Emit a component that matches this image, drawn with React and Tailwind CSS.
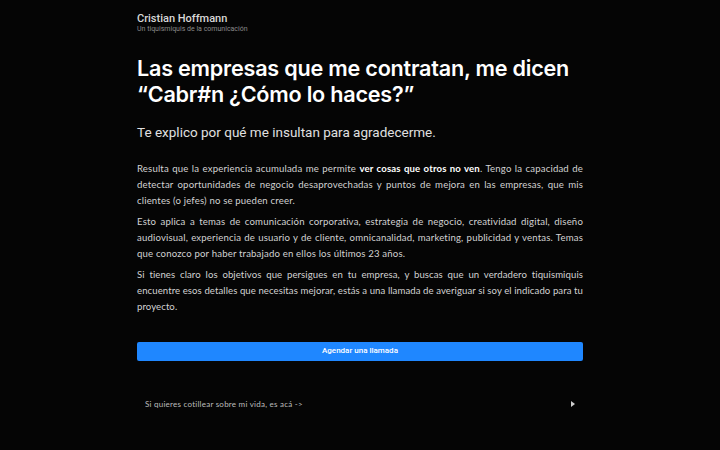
export default function App() {
  return (
    <div className="min-h-screen w-full bg-[#050505] text-[#e6e6e6]">
      <div className="w-[446px] mx-auto pt-[13px]">
        <header className="font-['Roboto',sans-serif] leading-none">
          <div className="text-[11px] font-medium text-[#d8d8d8]">Cristian Hoffmann</div>
          <div className="text-[7px] text-[#8a8a8a] mt-[2px]">Un tiquismiquis de la comunicación</div>
        </header>

        <h1 className="mt-[22px] font-['Inter',sans-serif] font-semibold text-[21.6px] leading-[26px] tracking-[-0.01em] text-white">
          Las empresas que me contratan, me dicen “Cabr#n ¿Cómo lo haces?”
        </h1>

        <p className="mt-[19px] font-['Roboto',sans-serif] text-[13.5px] leading-none text-[#e0e0e0]">
          Te explico por qué me insultan para agradecerme.
        </p>

        <div className="mt-[21px] font-['Lato',sans-serif] text-[9.6px] leading-[16px] tracking-[0.017em] text-[#d2d2d2] text-justify space-y-[5px]">
          <p>
            Resulta que la experiencia acumulada me permite <strong className="font-bold text-white">ver cosas que otros no ven</strong>. Tengo la capacidad de detectar oportunidades de negocio desaprovechadas y puntos de mejora en las empresas, que mis clientes (o jefes) no se pueden creer.
          </p>
          <p>
            Esto aplica a temas de comunicación corporativa, estrategia de negocio, creatividad digital, diseño audiovisual, experiencia de usuario y de cliente, omnicanalidad, marketing, publicidad y ventas. Temas que conozco por haber trabajado en ellos los últimos 23 años.
          </p>
          <p className="tracking-[0.008em]">
            Si tienes claro los objetivos que persigues en tu empresa, y buscas que un verdadero tiquismiquis encuentre esos detalles que necesitas mejorar, estás a una llamada de averiguar si soy el indicado para tu proyecto.
          </p>
        </div>

        <button className="mt-[27px] w-full h-[19px] rounded-[2px] bg-[#1f87ff] text-white font-['Roboto',sans-serif] font-medium text-[8px] flex items-center justify-center">
          Agendar una llamada
        </button>

        <div className="mt-[37px] flex items-center justify-between pl-[8px] pr-[8px] font-['Lato',sans-serif] text-[8px] tracking-[0.03em] text-[#bdbdbd]">
          <span>Si quieres cotillear sobre mi vida, es acá -&gt;</span>
          <svg width="4" height="6" viewBox="0 0 4 6" className="text-[#cfcfcf]">
            <path d="M0 0 L4 3 L0 6 Z" fill="currentColor" />
          </svg>
        </div>
      </div>
    </div>
  );
}
